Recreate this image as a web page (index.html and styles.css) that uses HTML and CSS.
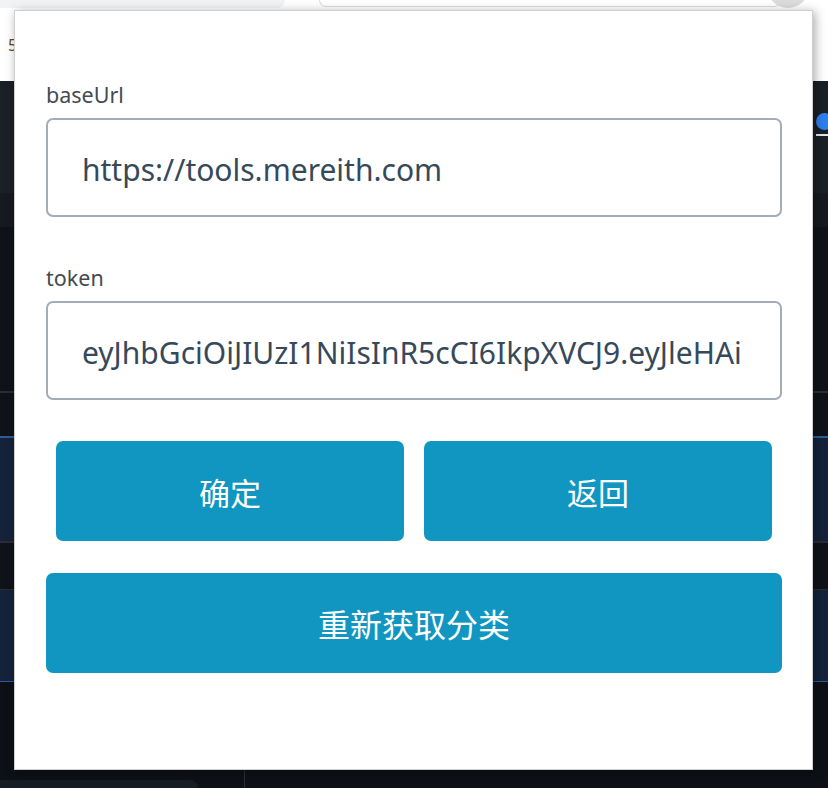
FILE: index.html
```html
<!DOCTYPE html>
<html lang="zh-CN">
<head>
<meta charset="utf-8">
<title>设置</title>
<link rel="stylesheet" href="styles.css">
</head>
<body>
<div class="bg">
  <div class="chrome">
    <div class="tab"></div>
    <div class="omnibox"></div>
    <div class="avatar"></div>
  </div>
  <div class="page-top"><span class="stub">5</span></div>
  <div class="band band1"><div class="ext"><span class="dot"></span><span class="ext-line"></span></div></div>
  <div class="band band2a"></div>
  <div class="band band2"></div>
  <div class="rule grey2"></div>
  <div class="band band3"></div>
  <div class="rule blue2"></div>
  <div class="band navy1"></div>
  <div class="rule grey2"></div>
  <div class="band band4"></div>
  <div class="rule grey1"></div>
  <div class="band navy2"></div>
  <div class="rule blue1"></div>
  <div class="band band5">
    <div class="footer">
      <div class="foot-panel"></div>
      <div class="foot-divider"></div>
    </div>
  </div>
</div>

<div class="popup">
  <div class="field">
    <label class="label" for="baseUrl">baseUrl</label>
    <div class="input" id="baseUrl"><span class="value">https://tools.mereith.com</span></div>
  </div>
  <div class="field field-second">
    <label class="label" for="token">token</label>
    <div class="input" id="token"><span class="value">eyJhbGciOiJIUzI1NiIsInR5cCI6IkpXVCJ9.eyJleHAi</span></div>
  </div>
  <div class="btn-row">
    <button class="btn">确定</button>
    <button class="btn">返回</button>
  </div>
  <button class="btn btn-wide">重新获取分类</button>
</div>
</body>
</html>
```
FILE: styles.css
```css
html, body {
  margin: 0;
  padding: 0;
}
body {
  width: 828px;
  height: 788px;
  overflow: hidden;
  background: #0e1117;
  font-family: "Noto Sans", "Noto Sans CJK SC", sans-serif;
  position: relative;
}
.bg {
  display: flex;
  flex-direction: column;
  height: 788px;
}
.chrome {
  height: 8px;
  background: #ffffff;
  display: flex;
  position: relative;
  overflow: hidden;
}
.tab {
  width: 285px;
  background: #f1f3f4;
  border-bottom-right-radius: 12px;
}
.omnibox {
  margin-left: 34px;
  width: 460px;
  height: 6px;
  border: 1px solid #dadce0;
  border-top: none;
  border-radius: 0 0 12px 12px;
  background: #ffffff;
}
.avatar {
  position: absolute;
  left: 768px;
  top: -30px;
  width: 40px;
  height: 38px;
  border-radius: 50%;
  background: #dcdcdc;
}
.page-top {
  height: 73px;
  background: #ffffff;
  position: relative;
}
.stub {
  position: absolute;
  left: 8px;
  top: 26px;
  font-size: 16px;
  color: #6b4a1a;
}
.band { flex: none; }
.band1 { height: 112px; background: #1b1f26; position: relative; }
.band2a { height: 34px; background: #16191f; }
.band2 { height: 164px; background: #0f1218; }
.band3 { height: 43px; background: #0f1218; }
.band4 { height: 46px; background: #0f1218; }
.navy1 { height: 103px; background: #14233b; }
.navy2 { height: 91px; background: #14233b; }
.band5 { flex: 1; background: #0d1117; position: relative; }
.rule { flex: none; }
.grey2 { height: 2px; background: #2a2d33; }
.grey1 { height: 1px; background: #2a2d33; }
.blue2 { height: 2px; background: #2c5d9c; }
.blue1 { height: 1px; background: #2c5d9c; }
.ext {
  position: absolute;
  left: 816px;
  top: 32px;
}
.dot {
  display: block;
  width: 17px;
  height: 17px;
  border-radius: 50%;
  background: #2f7ff0;
}
.ext-line {
  display: block;
  margin-top: 4px;
  width: 12px;
  height: 2px;
  background: #e6e6e6;
}
.footer {
  position: absolute;
  left: 0;
  right: 0;
  top: 87px;
  bottom: 0;
}
.foot-panel {
  position: absolute;
  left: 0;
  top: 11px;
  width: 198px;
  height: 20px;
  background: #181c24;
  border-top-right-radius: 8px;
}
.foot-divider {
  position: absolute;
  left: 244px;
  top: 0;
  width: 1px;
  height: 30px;
  background: #2b2f36;
}

.popup {
  position: absolute;
  left: 14px;
  top: 10px;
  width: 799px;
  height: 760px;
  box-sizing: border-box;
  background: #ffffff;
  border: 1px solid #cfcfcf;
  box-shadow: 2px 2px 10px rgba(0, 0, 0, 0.35);
  padding: 69px 30px 0 31px;
  display: flex;
  flex-direction: column;
}
.field {
  display: flex;
  flex-direction: column;
}
.field-second {
  margin-top: 46px;
}
.label {
  font-size: 21.5px;
  line-height: 30px;
  color: #444a50;
  margin-bottom: 8px;
}
.input {
  height: 99px;
  box-sizing: border-box;
  border: 2px solid #a3adb8;
  border-radius: 7px;
  padding: 5px 32px 0 34px;
  display: flex;
  align-items: center;
}
.value {
  flex: 1;
  min-width: 0;
  font-size: 30px;
  line-height: 40px;
  color: #36495a;
  white-space: nowrap;
  overflow: hidden;
}
.btn-row {
  margin-top: 41px;
  padding: 0 10px;
  display: grid;
  grid-template-columns: 1fr 1fr;
  gap: 20px;
}
.btn {
  height: 100px;
  border: none;
  border-radius: 7px;
  background: #1196c1;
  color: #ffffff;
  font-family: "Noto Sans CJK SC", sans-serif;
  font-size: 31px;
  padding: 0;
}
.btn-wide {
  margin-top: 32px;
  width: 100%;
  font-size: 32px;
}
```
